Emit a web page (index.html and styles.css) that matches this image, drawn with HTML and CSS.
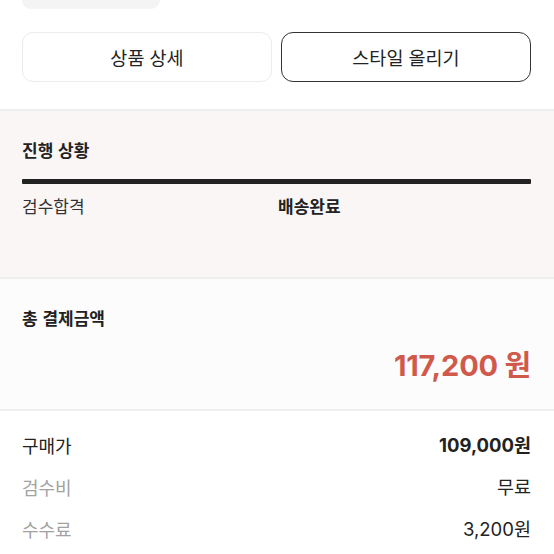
FILE: index.html
```html
<!DOCTYPE html>
<html lang="ko">
  <head>
    <meta charset="UTF-8" />
    <meta name="viewport" content="width=device-width, initial-scale=1.0" />
    <title>구매 상세</title>
    <link rel="stylesheet" href="styles.css">
  </head>
  <body>
    <div class="tag"></div>

    <div class="btn-row">
      <button class="btn">상품 상세</button>
      <button class="btn btn-dark">스타일 올리기</button>
    </div>

    <div class="status">
      <h3>진행 상황</h3>
      <div class="status-bar"></div>
      <div class="status-steps">
        <span>검수합격</span>
        <span class="current">배송완료</span>
      </div>
    </div>

    <div class="payment">
      <h3>총 결제금액</h3>
      <p class="total">117,200 원</p>
    </div>

    <div class="details">
      <div class="row">
        <span class="label strong">구매가</span>
        <span class="value bold">109,000원</span>
      </div>
      <div class="row">
        <span class="label">검수비</span>
        <span class="value">무료</span>
      </div>
      <div class="row">
        <span class="label">수수료</span>
        <span class="value">3,200원</span>
      </div>
    </div>
  </body>
</html>
```

FILE: styles.css
```css
body {
  margin: 0;
  background-color: #ffffff;
  color: #222222;
  font-family: "Inter", "Noto Sans CJK KR", sans-serif;
}

h3 {
  margin: 0;
  font-family: "Noto Sans CJK KR", sans-serif;
  font-size: 17px;
  line-height: 22px;
  font-weight: 700;
}

.tag {
  margin-left: 22px;
  width: 138px;
  height: 9px;
  background-color: #f4f4f4;
  border-radius: 0 0 12px 12px;
}

.btn-row {
  display: grid;
  grid-template-columns: 1fr 1fr;
  gap: 9px;
  padding: 23px 23px 0 22px;
  margin-bottom: 27px;
}

.btn {
  height: 50px;
  background-color: #ffffff;
  border: 1px solid #ececec;
  border-radius: 11px;
  font-family: "Noto Sans CJK KR", sans-serif;
  font-size: 18.5px;
  color: #222222;
}

.btn-dark {
  border: 1.5px solid #333333;
  border-radius: 12px;
}

.status {
  height: 170px;
  box-sizing: border-box;
  padding: 28px 23px 0 22px;
  background-color: #faf6f5;
  border-top: 2px solid #efeeee;
  border-bottom: 2px solid #efefef;
}

.status-bar {
  height: 5px;
  margin-top: 18px;
  background-color: #222222;
  border-radius: 1px;
}

.status-steps {
  display: grid;
  grid-template-columns: 256px 1fr;
  margin-top: 11px;
  font-family: "Noto Sans CJK KR", sans-serif;
  font-size: 17px;
  line-height: 22px;
  color: #333333;
}

.status-steps .current {
  font-weight: 700;
  color: #222222;
}

.payment {
  padding: 28px 23px 25px 22px;
  background-color: #fcfcfc;
  border-bottom: 2px solid #efefef;
}

.total {
  margin: 19px 0 0;
  text-align: right;
  font-size: 29px;
  line-height: 36px;
  font-weight: 700;
  color: #cf5a4b;
  letter-spacing: -0.2px;
}

.details {
  display: flex;
  flex-direction: column;
  gap: 20px;
  padding: 23px 23px 0 22px;
}

.row {
  display: flex;
  justify-content: space-between;
  font-size: 18px;
  line-height: 22px;
}

.label {
  color: #a2a2a2;
  font-family: "Noto Sans CJK KR", sans-serif;
}

.label.strong {
  color: #222222;
}

.value {
  color: #222222;
  font-size: 18.5px;
}

.bold {
  font-weight: 700;
}
```
